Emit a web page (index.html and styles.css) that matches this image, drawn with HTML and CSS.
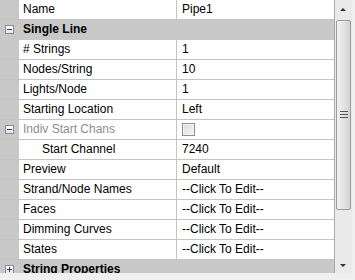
FILE: index.html
```html
<!DOCTYPE html>
<html lang="en">
<head>
  <meta charset="UTF-8" />
  <title>Model Properties</title>
  <link rel="stylesheet" href="styles.css">
</head>
<body>
  <div class="propgrid">
    <div class="grid">
      <div class="row"><div class="name">Name</div><div class="value">Pipe1</div></div>
      <div class="row category">
        <span class="toggle minus"></span>
        <div class="name">Single Line</div>
      </div>
      <div class="row"><div class="name"># Strings</div><div class="value">1</div></div>
      <div class="row"><div class="name">Nodes/String</div><div class="value">10</div></div>
      <div class="row"><div class="name">Lights/Node</div><div class="value">1</div></div>
      <div class="row"><div class="name">Starting Location</div><div class="value">Left</div></div>
      <div class="row">
        <span class="toggle minus"></span>
        <div class="name disabled">Indiv Start Chans</div>
        <div class="value"><span class="checkbox"></span></div>
      </div>
      <div class="row"><div class="name child">Start Channel</div><div class="value">7240</div></div>
      <div class="row"><div class="name">Preview</div><div class="value">Default</div></div>
      <div class="row"><div class="name">Strand/Node Names</div><div class="value">--Click To Edit--</div></div>
      <div class="row"><div class="name">Faces</div><div class="value">--Click To Edit--</div></div>
      <div class="row"><div class="name">Dimming Curves</div><div class="value">--Click To Edit--</div></div>
      <div class="row"><div class="name">States</div><div class="value">--Click To Edit--</div></div>
      <div class="row category">
        <span class="toggle plus"></span>
        <div class="name">String Properties</div>
      </div>
    </div>
    <div class="scrollbar">
      <div class="arrow up"></div>
      <div class="track">
        <div class="thumb"><span class="grip"></span></div>
      </div>
      <div class="arrow down"></div>
    </div>
  </div>
</body>
</html>
```

FILE: styles.css
```css
* {
  box-sizing: border-box;
}
body {
  margin: 0;
  background: #f0f0f0;
  font-family: 'Liberation Sans', Arial, sans-serif;
  font-size: 12px;
  color: #000;
}
.propgrid {
  display: flex;
  width: 352px;
  height: 273px;
  overflow: hidden;
  background: #fff;
}
.grid {
  width: 334px;
  height: 273px;
  overflow: hidden;
  background: #c8c8c8;
}
.row {
  position: relative;
  display: flex;
  height: 20px;
  padding-left: 19px;
  border-bottom: 1px solid #c4c4c4;
}
.name, .value {
  background: #fff;
  line-height: 19px;
  padding-left: 4px;
  white-space: nowrap;
  overflow: hidden;
}
.name {
  width: 158px;
  border-right: 1px solid #c4c4c4;
}
.value {
  flex: 1;
  padding-left: 5px;
}
.name.child {
  padding-left: 23px;
}
.name.disabled {
  color: #8d8d8d;
}
.category {
  background: #c8c8c8;
  border-bottom-color: #c8c8c8;
}
.category .name {
  background: transparent;
  border-right: none;
  font-weight: bold;
  width: auto;
}
.toggle {
  position: absolute;
  left: 5px;
  top: 5px;
  width: 9px;
  height: 9px;
  border: 1px solid #8a8a8a;
  background: linear-gradient(#ffffff, #e4e4e4);
}
.toggle::before, .plus::after {
  content: "";
  position: absolute;
  background: #2c3f86;
}
.toggle::before {
  left: 1px;
  top: 3px;
  width: 5px;
  height: 1px;
}
.plus::after {
  left: 3px;
  top: 1px;
  width: 1px;
  height: 5px;
}
.checkbox {
  display: inline-block;
  width: 13px;
  height: 13px;
  margin-top: 3px;
  vertical-align: top;
  border: 1px solid #8e8f8f;
  background: linear-gradient(135deg, #dcdcdc, #f6f6f6);
  box-shadow: inset 0 0 0 1px #f4f4f4;
}
.scrollbar {
  width: 18px;
  display: flex;
  flex-direction: column;
  background: #eaeaea;
  border-left: 1px solid #a8a8a8;
}
.arrow {
  position: relative;
  height: 17px;
}
.arrow::after {
  content: "";
  position: absolute;
  left: 5px;
  border-left: 3px solid transparent;
  border-right: 3px solid transparent;
}
.arrow.up::after {
  top: 8px;
  border-bottom: 3px solid #333;
}
.arrow.down::after {
  top: 8px;
  border-top: 3px solid #333;
}
.track {
  flex: 1;
  padding: 3px 1px 0 1px;
}
.thumb {
  position: relative;
  height: 190px;
  border: 1px solid #9c9c9c;
  border-radius: 2px;
  background: linear-gradient(90deg, #f2f2f2, #e4e4e4 50%, #d2d2d2);
}
.grip {
  position: absolute;
  left: 3px;
  top: 90px;
  width: 8px;
  height: 7px;
  border-top: 1px solid #555;
  border-bottom: 1px solid #555;
}
.grip::after {
  content: "";
  position: absolute;
  left: 0;
  top: 2px;
  width: 8px;
  height: 1px;
  background: #555;
}
```
